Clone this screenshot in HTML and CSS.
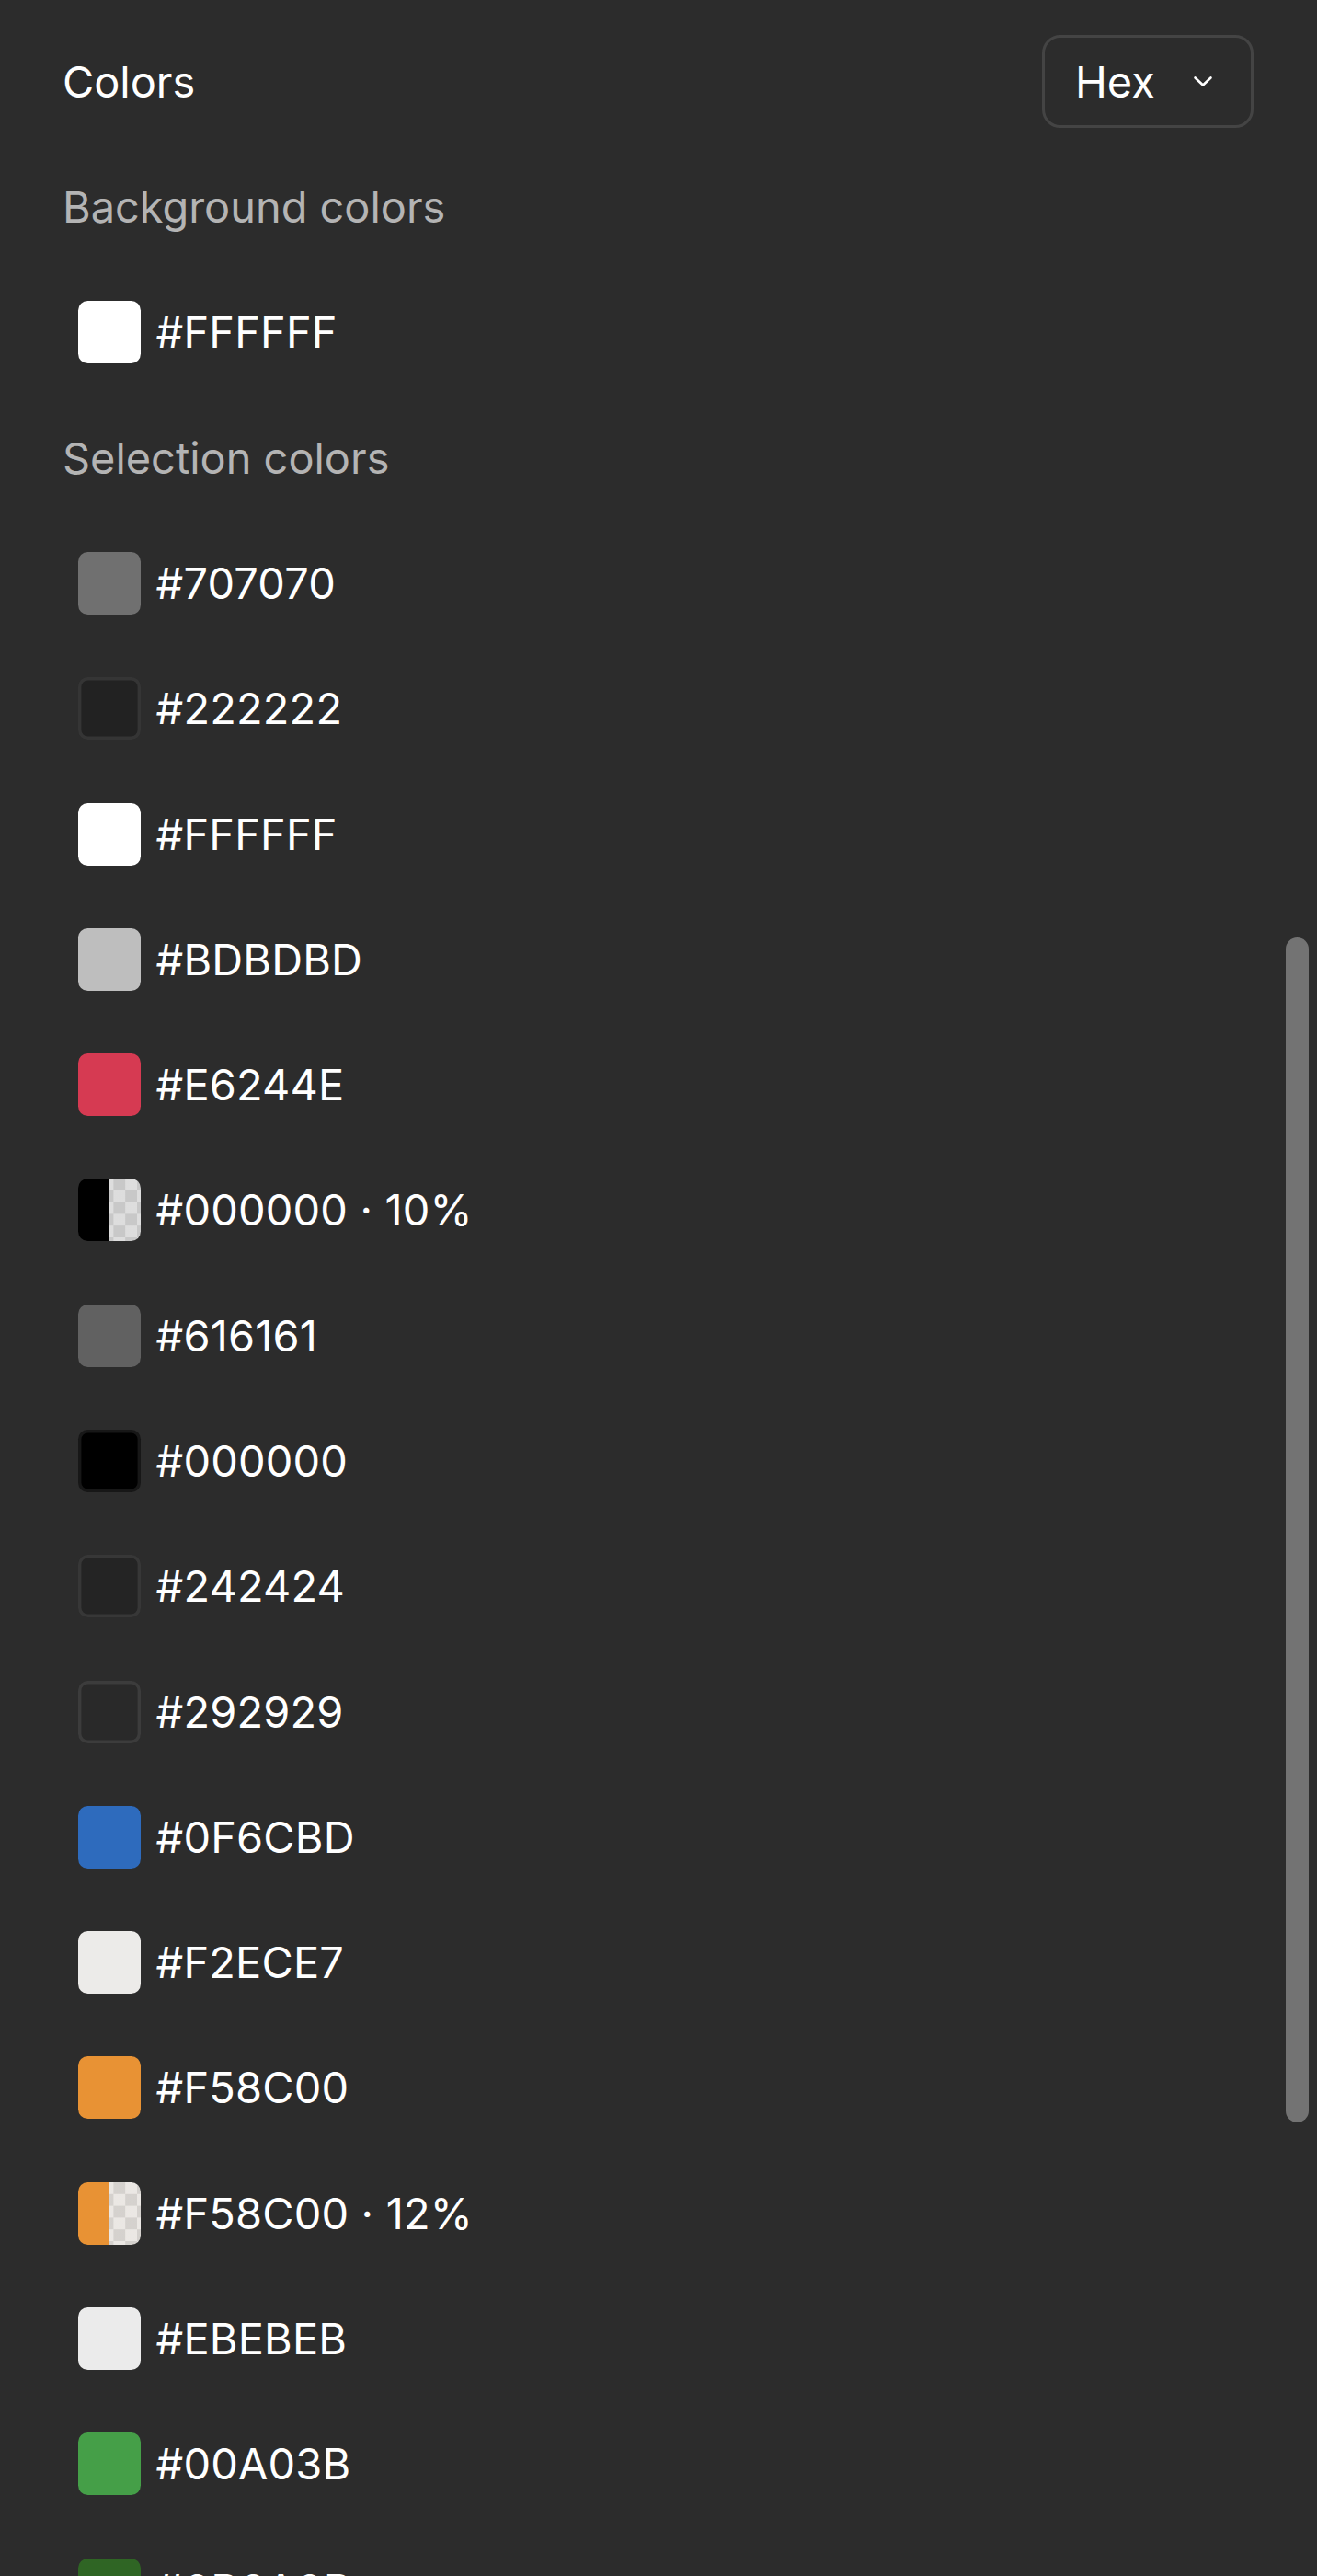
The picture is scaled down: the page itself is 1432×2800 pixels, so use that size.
FILE: index.html
```html
<!DOCTYPE html>
<html lang="en">
<head>
<meta charset="utf-8">
<title>Colors</title>
<link rel="stylesheet" href="styles.css">
</head>
<body>
<div class="panel">
  <div class="row header">
    <span class="title">Colors</span>
    <div class="select">
      <span class="select-label">Hex</span>
      <svg class="chevron" width="22" height="13" viewBox="0 0 22 13"><path d="M2.5 2.5 L11 10.5 L19.5 2.5" fill="none" stroke="#ffffff" stroke-width="2.6" stroke-linecap="round" stroke-linejoin="round"/></svg>
    </div>
  </div>

  <div class="row label">Background colors</div>
  <div class="row item"><span class="swatch" style="--c:#ffffff"></span><span class="hex">#FFFFFF</span></div>

  <div class="row label">Selection colors</div>
  <div class="row item"><span class="swatch" style="--c:#707070"></span><span class="hex">#707070</span></div>
  <div class="row item"><span class="swatch outlined" style="--c:#222222"></span><span class="hex">#222222</span></div>
  <div class="row item"><span class="swatch" style="--c:#ffffff"></span><span class="hex">#FFFFFF</span></div>
  <div class="row item"><span class="swatch" style="--c:#bebebe"></span><span class="hex">#BDBDBD</span></div>
  <div class="row item"><span class="swatch" style="--c:#d63a52"></span><span class="hex">#E6244E</span></div>
  <div class="row item"><span class="swatch split" style="--c:#000000; --a:rgba(0,0,0,0.06)"></span><span class="hex">#000000 · 10%</span></div>
  <div class="row item"><span class="swatch" style="--c:#616161"></span><span class="hex">#616161</span></div>
  <div class="row item"><span class="swatch outlined" style="--c:#000000"></span><span class="hex">#000000</span></div>
  <div class="row item"><span class="swatch outlined" style="--c:#242424"></span><span class="hex">#242424</span></div>
  <div class="row item"><span class="swatch outlined" style="--c:#292929"></span><span class="hex">#292929</span></div>
  <div class="row item"><span class="swatch" style="--c:#2e6bbd"></span><span class="hex">#0F6CBD</span></div>
  <div class="row item"><span class="swatch" style="--c:#ecebe9"></span><span class="hex">#F2ECE7</span></div>
  <div class="row item"><span class="swatch" style="--c:#e89234"></span><span class="hex">#F58C00</span></div>
  <div class="row item"><span class="swatch split" style="--c:#e89234; --a:rgba(232,146,52,0.04)"></span><span class="hex">#F58C00 · 12%</span></div>
  <div class="row item"><span class="swatch" style="--c:#ebebeb"></span><span class="hex">#EBEBEB</span></div>
  <div class="row item"><span class="swatch" style="--c:#459f48"></span><span class="hex">#00A03B</span></div>
  <div class="row item"><span class="swatch" style="--c:#2f6524"></span><span class="hex">#0B6A0B</span></div>

  <div class="scrollbar"></div>
</div>
</body>
</html>
```

FILE: styles.css
```css
html, body {
  margin: 0;
  padding: 0;
  background: #2c2c2c;
  height: 2800px;
  overflow: hidden;
}

.panel {
  position: relative;
  box-sizing: border-box;
  height: 2800px;
  padding: 20.6px 69px 0 68px;
  font-family: "Inter", "Noto Sans", sans-serif;
  font-size: 46.9px;
  color: #ffffff;
}

.row {
  height: 136.3px;
  display: flex;
  align-items: center;
}

.header {
  justify-content: space-between;
}

.title {
  font-weight: 400;
  color: #ffffff;
}

.select {
  box-sizing: border-box;
  height: 101px;
  width: 230px;
  border: 3.4px solid #444444;
  border-radius: 20px;
  display: flex;
  align-items: center;
  padding-left: 33px;
}

.select-label {
  color: #ffffff;
}

.chevron {
  margin-left: 41px;
  display: block;
}

.label {
  color: #b4b4b4;
}

.item {
  padding-left: 17px;
  gap: 16.5px;
}

.swatch {
  flex: none;
  width: 68px;
  height: 68px;
  border-radius: 10.5px;
  background: var(--c);
}

.swatch.outlined {
  box-shadow: inset 0 0 0 3.4px rgba(255, 255, 255, 0.09);
}

.swatch.split {
  background:
    linear-gradient(to right, var(--c) 0 50%, transparent 50% 100%),
    linear-gradient(var(--a), var(--a)),
    repeating-conic-gradient(#d4d4d4 0 25%, #ebebeb 0 50%) 0 0 / 25.6px 25.6px;
}

.hex {
  color: #ffffff;
  white-space: nowrap;
  letter-spacing: 0.2px;
}

.scrollbar {
  position: absolute;
  top: 1019px;
  right: 8.6px;
  width: 25.6px;
  height: 1288px;
  border-radius: 13px;
  background: #737373;
}
```
